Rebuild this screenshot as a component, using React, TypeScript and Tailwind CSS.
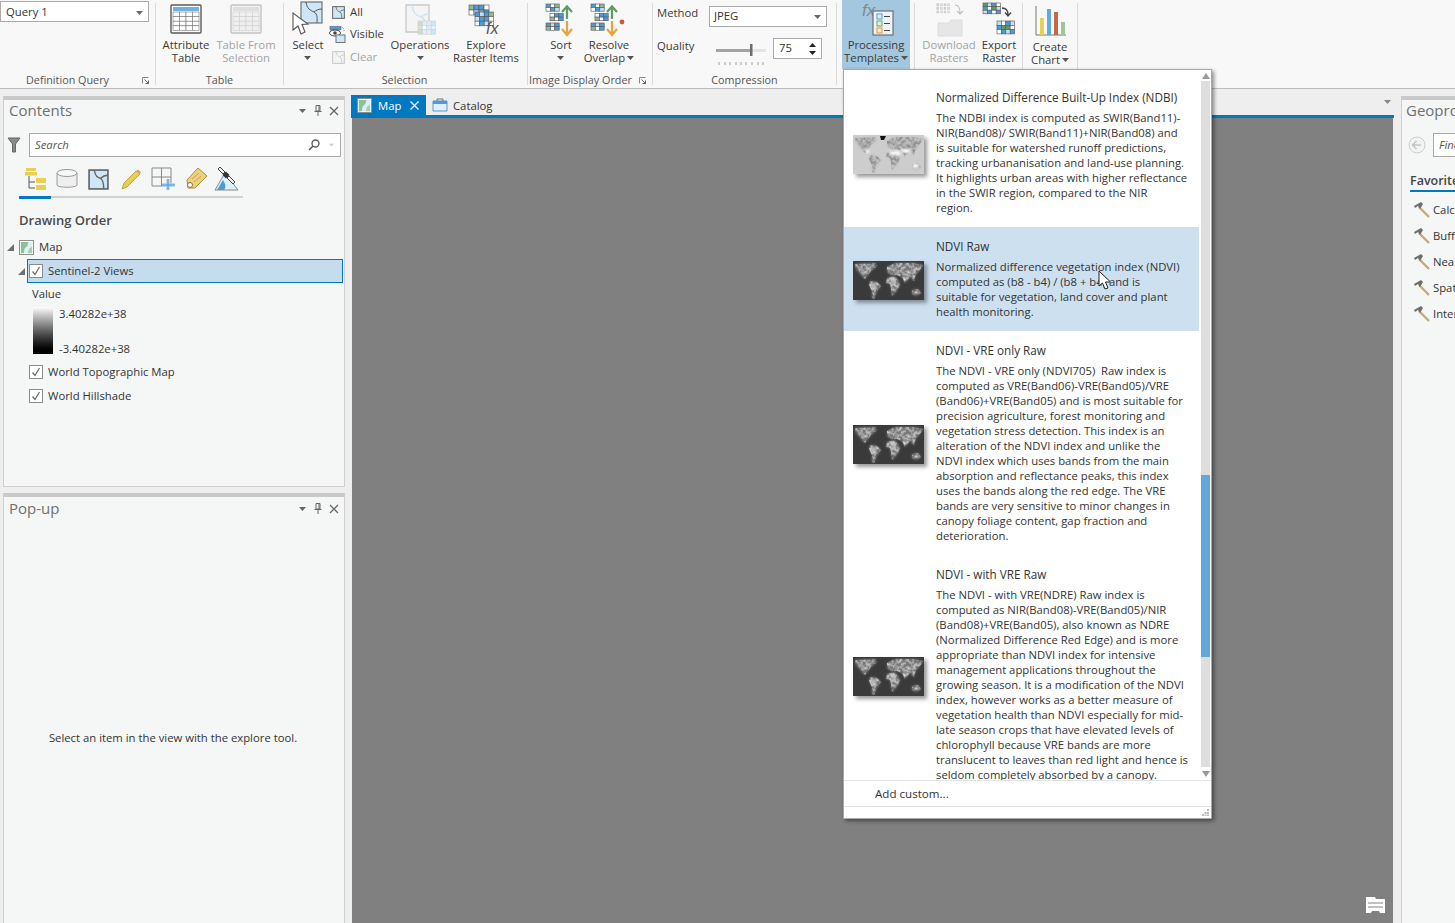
import React from "react";

const Tri = ({ c = "#555", cls = "" }: { c?: string; cls?: string }) => (
  <svg width="7" height="4" viewBox="0 0 7 4" className={"inline-block " + cls}><path d="M0 0H7L3.5 4Z" fill={c} /></svg>
);

function Cells({ x, y, c, r, w, h, fills = [], stroke = "#555" }: { x: number; y: number; c: number; r: number; w: number; h: number; fills?: string[]; stroke?: string }) {
  const out: React.ReactNode[] = [];
  for (let j = 0; j < r; j++)
    for (let i = 0; i < c; i++)
      out.push(<rect key={i + "-" + j} x={x + i * w} y={y + j * h} width={w} height={h} fill={fills[(i + j * c) % (fills.length || 1)] || "#fff"} stroke={stroke} strokeWidth="0.6" />);
  return <g>{out}</g>;
}

const AttrTable = ({ dim = false }: { dim?: boolean }) => {
  const s = dim ? "#c4c4c4" : "#5a5a5a";
  return (
    <svg width="32" height="30" viewBox="0 0 32 30">
      <rect x="1" y="1" width="30" height="28" rx="1" fill={dim ? "#f2f2f2" : "#fff"} stroke={s} strokeWidth="1.4" />
      <rect x="3" y="3" width="26" height="4" fill={dim ? "#dedede" : "#6fb1e3"} />
      <Cells x={3} y={8} c={4} r={4} w={6.5} h={4.6} stroke={dim ? "#cfcfcf" : "#777"} fills={[dim ? "#efefef" : "#fff"]} />
    </svg>
  );
};

const MapGlyph = ({ size, dim = false }: { size: number; dim?: boolean }) => (
  <svg width={size} height={size} viewBox="0 0 20 20">
    <rect x="1" y="1" width="18" height="18" fill={dim ? "#f4f4f4" : "#cfe6f7"} stroke={dim ? "#c6c6c6" : "#5f5f5f"} strokeWidth="1.5" />
    <path d="M6 1C7 7 9 8 12 9C15 11 15 15 15 19M12 9C14 7 16 6 19 6" fill="none" stroke={dim ? "#c9c9c9" : "#666"} strokeWidth="1.3" />
  </svg>
);

const MapThumb = ({ size }: { size: number }) => (
  <svg width={size} height={size} viewBox="0 0 16 16">
    <rect x="0.500" y="0.500" width="15" height="15" fill="#fff" stroke="#8a8a8a" />
    <rect x="2" y="2" width="12" height="12" fill="#dceefa" />
    <path d="M2 2H10L9 6L6 9L5 14H2Z" fill="#8fbf96" />
    <path d="M11 9L14 7V14H9Z" fill="#a7cfa9" />
  </svg>
);

const SelectIcon = () => (
  <svg width="36" height="34" viewBox="0 0 36 34">
    <rect x="10" y="1" width="21" height="21" fill="#cfe6f7" stroke="#666" strokeWidth="1.1" />
    <path d="M15 1C16 8 19 9 23 11C27 13 26 18 26 22M23 11C25 9 28 8 31 8" fill="none" stroke="#555" strokeWidth="1" />
    <path d="M2 12L2 29L7 25L10 33L14 31L11 23.5L17 23Z" fill="#fff" stroke="#555" strokeWidth="1.1" />
  </svg>
);

const VisibleIcon = () => (
  <svg width="17" height="17" viewBox="0 0 17 17">
    <rect x="1" y="0.5" width="11" height="3.5" fill="#4f9bd6" stroke="#555" strokeWidth="0.5" />
    <ellipse cx="6" cy="7" rx="5.5" ry="3" fill="#fff" stroke="#444" strokeWidth="1" />
    <circle cx="6" cy="7" r="1.8" fill="#444" />
    <rect x="7" y="9" width="9" height="7.5" fill="#cfe6f7" stroke="#666" strokeWidth="0.9" />
    <path d="M13 1L15 3V6" stroke="#555" fill="none" strokeWidth="0.8" strokeDasharray="1 1" />
  </svg>
);

const OperationsIcon = () => (
  <svg width="32" height="33" viewBox="0 0 32 33">
    <path d="M1 1H24V28H1Z" fill="#f4f4f4" stroke="#c9c9c9" strokeWidth="1.3" />
    <path d="M7 1C8 10 12 12 16 13C19 14 20 16 20 20M16 13C18 11 21 10 24 10" fill="none" stroke="#d4e3ee" strokeWidth="1.6" />
    <Cells x={13} y={17} c={4} r={3} w={4.4} h={4.4} stroke="#c9d3da" fills={["#cfdcc6", "#dff0fb", "#e6eef4", "#cfe6f7", "#d8e4cd", "#ffffff", "#dff0fb", "#eaf2f8"]} />
  </svg>
);

const FX = ({ x, y, size = 16, c = "#555" }: { x: number; y: number; size?: number; c?: string }) => (
  <text x={x} y={y} fontFamily="'Liberation Sans',sans-serif" fontStyle="italic" fontSize={size} fill={c}>fx</text>
);

const ExploreIcon = () => (
  <svg width="36" height="36" viewBox="0 0 36 36">
    <Cells x={1} y={1} c={4} r={2} w={5} h={5} fills={["#8fb996", "#4f9bd6", "#4f9bd6", "#fff", "#fff", "#bfe0f5"]} />
    <Cells x={7} y={8} c={4} r={3} w={4.6} h={4.6} fills={["#4f9bd6", "#bfe0f5", "#4f9bd6", "#8fb996", "#bfe0f5", "#4f9bd6", "#4f9bd6", "#fff", "#fff", "#4f9bd6", "#bfe0f5", "#fff"]} />
    <FX x={18} y={30} size={16} />
  </svg>
);

const Stacks = () => (
  <g>
    <Cells x={1} y={1} c={3} r={2} w={4.4} h={3.6} fills={["#4f9bd6", "#fff", "#8fb996", "#fff", "#4f9bd6", "#bfe0f5"]} />
    <Cells x={5} y={10.5} c={3} r={2} w={4.4} h={3.6} fills={["#fff", "#4f9bd6", "#4f9bd6", "#8fb996", "#fff", "#4f9bd6"]} />
    <Cells x={1} y={20} c={3} r={2} w={4.4} h={3.6} fills={["#4f9bd6", "#bfe0f5", "#4f9bd6", "#8fb996", "#fff", "#4f9bd6"]} />
  </g>
);

const SortIcon = ({ dot = false }: { dot?: boolean }) => (
  <svg width={dot ? 38 : 32} height="34" viewBox={dot ? "0 0 38 34" : "0 0 32 34"}>
    <Stacks />
    <path d="M22 16V5M17 9L22 3.500L27 9" fill="none" stroke="#5c9e5f" strokeWidth="2.2" />
    <path d="M22 18V31M17 26L22 32L27 26" fill="none" stroke="#e8a33f" strokeWidth="2.2" />
    {dot && <circle cx="32" cy="19" r="2.4" fill="#c9573b" />}
  </svg>
);

const TemplatesIcon = () => (
  <svg width="36" height="36" viewBox="0 0 36 36">
    <FX x={1} y={15} size={17} c="#7f8a94" />
    <rect x="12" y="10" width="20" height="24" fill="#eef3f6" stroke="#666" strokeWidth="1.1" />
    <rect x="16" y="13" width="5" height="5" fill="#dff0fb" stroke="#4f9bd6" />
    <rect x="16" y="20" width="5" height="5" fill="#dff0db" stroke="#6fa85f" />
    <rect x="16" y="27" width="5" height="5" fill="#fbe6cf" stroke="#e0953c" />
    <path d="M23 15.500H29M23 22.500H29M23 29.500H29" stroke="#444" strokeWidth="1" />
  </svg>
);

const DownloadIcon = () => (
  <svg width="36" height="36" viewBox="0 0 36 36">
    <Cells x={1} y={2} c={4} r={3} w={3.6} h={3.6} stroke="#fff" fills={["#cfcfcf", "#d8d8d8"]} />
    <path d="M20 4C24 4 25 7 25 12M22 10L25 13L28 10" fill="none" stroke="#bfbfbf" strokeWidth="1.2" />
    <path d="M3 22H14L16 19H27V35H3Z" fill="#e6e6e6" stroke="#dcdcdc" />
  </svg>
);

const ExportIcon = () => (
  <svg width="36" height="36" viewBox="0 0 36 36">
    <Cells x={1} y={2} c={4} r={3} w={4.4} h={3.6} fills={["#5a9e5f", "#bfe0f5", "#4f9bd6", "#fff", "#4f9bd6", "#fff", "#5a9e5f", "#bfe0f5", "#bfe0f5", "#4f9bd6", "#fff", "#4f9bd6"]} />
    <path d="M20 7C25 7 26 10 26 14M23 11.500L26 15L29 11.500" fill="none" stroke="#444" strokeWidth="1.3" />
    <Cells x={15} y={20} c={4} r={3} w={4.4} h={4.3} fills={["#bfe0f5", "#fff", "#4f9bd6", "#bfe0f5", "#4f9bd6", "#5a9e5f", "#5a9e5f", "#fff", "#fff", "#4f9bd6", "#bfe0f5", "#4f9bd6"]} />
  </svg>
);

const ChartIcon = () => (
  <svg width="32" height="32" viewBox="0 0 32 32">
    <path d="M1 1V30H31" fill="none" stroke="#777" strokeWidth="1" />
    <rect x="5" y="13" width="4" height="17" fill="#e7cf59" />
    <rect x="12" y="4" width="4" height="26" fill="#5dabe0" />
    <rect x="19" y="7" width="4" height="23" fill="#c7674a" />
    <rect x="26" y="17" width="4" height="13" fill="#9fc79c" />
  </svg>
);

const Launcher = () => (
  <svg width="7" height="7" viewBox="0 0 7 7"><path d="M0.500 6.500V0.500H6.500" fill="none" stroke="#888" /><path d="M2.500 2.500L6.500 6.500M6.500 3.500V6.500H3.500" fill="none" stroke="#666" /></svg>
);

function Tall({ icon, a, b, w, dim, caret, inlineCaret, top = 38, cls = "" }: { icon: React.ReactNode; a: string; b?: string; w: number; dim?: boolean; caret?: boolean; inlineCaret?: boolean; top?: number; cls?: string }) {
  return (
    <div className={"flex flex-col items-center shrink-0 " + cls} style={{ width: w }}>
      <div className="flex items-start justify-center" style={{ height: top }}>{icon}</div>
      <div className={"text-center leading-[13px] whitespace-nowrap text-[11.3px] " + (dim ? "text-[#a3a3a3]" : "text-[#3a3a3a]")}>
        <div>{a}</div>
        {b && <div>{b}{inlineCaret && <Tri cls="ml-[2px] mb-[2px]" />}</div>}
        {caret && <div className="h-[13px] flex items-center justify-center"><Tri /></div>}
      </div>
    </div>
  );
}

const Group = ({ w, label, launcher, children, labelPad = 0 }: { w: number; label: string; launcher?: boolean; children: React.ReactNode; labelPad?: number }) => (
  <div className="flex flex-col shrink-0 relative" style={{ width: w }}>
    <div className="h-[72px] flex">{children}</div>
    <div className="h-[16px] flex items-center justify-center text-[10.800px] text-[#555] whitespace-nowrap" style={{ paddingRight: labelPad }}>{label}</div>
    {launcher && <div className="absolute right-[6px] bottom-[4px] flex"><Launcher /></div>}
  </div>
);

const Div = () => <div className="w-px my-[3px] bg-[#dadada] shrink-0" />;

const SmallRow = ({ icon, label, dim }: { icon: React.ReactNode; label: string; dim?: boolean }) => (
  <div className="h-[22.5px] flex items-center whitespace-nowrap">
    <div className="w-[18px] flex justify-start">{icon}</div>
    <span className={"text-[11.3px] " + (dim ? "text-[#a3a3a3]" : "text-[#3a3a3a]")}>{label}</span>
  </div>
);

function Ribbon() {
  return (
    <div className="h-[89px] shrink-0 bg-[#f8f8f8] border-b border-[#bdbdbd] flex">
      <Group w={155} label="Definition Query" launcher labelPad={20}>
        <div className="mt-[1px] h-[21px] w-[149px] bg-white border border-[#ababab] flex items-center justify-between pl-[5px] pr-[5px] pt-[2px] text-[11.3px] text-[#333]">
          <span>Query 1</span><Tri c="#666" />
        </div>
      </Group>
      <Div />
      <Group w={127} label="Table">
        <Tall w={60} a="Attribute" b="Table" icon={<div className="mt-[4px]"><AttrTable /></div>} />
        <Tall w={60} dim a="Table From" b="Selection" icon={<div className="mt-[4px]"><AttrTable dim /></div>} />
      </Group>
      <Div />
      <Group w={243} label="Selection" labelPad={2}>
        <Tall w={48} a="Select" caret icon={<div className="mt-[1px] ml-[1px]"><SelectIcon /></div>} />
        <div className="w-[58px] pt-[1px]">
          <SmallRow label="All" icon={<MapGlyph size={13} />} />
          <SmallRow label="Visible" icon={<div className="ml-[-3px]"><VisibleIcon /></div>} />
          <SmallRow dim label="Clear" icon={<MapGlyph size={13} dim />} />
        </div>
        <Tall w={60} a="Operations" caret icon={<div className="mt-[4px] ml-[2px]"><OperationsIcon /></div>} />
        <Tall w={70} cls="ml-[1px]" a="Explore" b="Raster Items" icon={<div className="mt-[4px]"><ExploreIcon /></div>} />
      </Group>
      <Div />
      <Group w={124} label="Image Display Order" launcher labelPad={19}>
        <Tall w={44} cls="ml-[11px]" a="Sort" caret icon={<div className="mt-[3px]"><SortIcon /></div>} />
        <Tall w={52} a="Resolve" b="Overlap" inlineCaret icon={<div className="mt-[3px]"><SortIcon dot /></div>} />
      </Group>
      <Div />
      <Group w={183} label="Compression">
        <div className="pl-[4px] w-[56px] text-[11.3px] text-[#3a3a3a] pt-[5px]">
          <div className="h-[33px]">Method</div>
          <div>Quality</div>
        </div>
        <div className="w-[118px] pt-[6px]">
          <div className="h-[21px] bg-white border border-[#ababab] flex items-center justify-between pl-[4px] pr-[5px] text-[11.3px] text-[#333]">
            <span>JPEG</span><Tri c="#666" />
          </div>
          <div className="flex mt-[11px] items-start">
            <div className="w-[50px] ml-[7px] mt-[4px]">
              <svg width="50" height="24" viewBox="0 0 50 24">
                <rect x="0" y="7" width="50" height="3" fill="#e4e4e4" />
                <rect x="0" y="7" width="35" height="3" fill="#a3a3a3" />
                <rect x="34" y="2" width="2.500" height="12" fill="#6d6d6d" />
                <path d="M3 20V23M9 20V23M14 20V23M20 20V23M25 20V23M30 20V23M36 20V23M42 20V23M47 20V23" stroke="#888" strokeWidth="0.8" />
              </svg>
            </div>
            <div className="ml-[7px] w-[49px] h-[21px] bg-white border border-[#ababab] flex items-center justify-between pl-[5px] pr-[5px] text-[11.3px] text-[#333]">
              <span>75</span>
              <span className="flex flex-col gap-[4px]">
                <svg width="7" height="4" viewBox="0 0 7 4"><path d="M0 4H7L3.500 0Z" fill="#222" /></svg>
                <svg width="7" height="4" viewBox="0 0 7 4"><path d="M0 0H7L3.500 4Z" fill="#222" /></svg>
              </span>
            </div>
          </div>
        </div>
      </Group>
      <Div />
      <div className="w-[5px] shrink-0" />
      <div className="w-[68px] h-[69px] bg-[#a4c7e0] shrink-0 flex">
        <Tall w={68} a="Processing" b="Templates" inlineCaret icon={<div className="mt-[1px] ml-[6px]"><TemplatesIcon /></div>} />
      </div>
      <div className="w-[4px] shrink-0" />
      <Div />
      <Tall w={54} cls="ml-[7px]" dim a="Download" b="Rasters" icon={<div className="mt-[1px] ml-[7px]"><DownloadIcon /></div>} />
      <Tall w={46} a="Export" b="Raster" icon={<div className="mt-[1px] ml-[2px]"><ExportIcon /></div>} />
      <Div />
      <Tall w={54} a="Create" b="Chart" inlineCaret top={40} icon={<div className="mt-[5px] ml-[1px]"><ChartIcon /></div>} />
      <Div />
    </div>
  );
}

const Check = () => (
  <span className="w-[14px] h-[14px] border border-[#8a8a8a] bg-white flex items-center justify-center shrink-0">
    <svg width="10" height="10" viewBox="0 0 10 10"><path d="M1.500 5.500L4 8.500L8.500 1" fill="none" stroke="#666" strokeWidth="1.200" /></svg>
  </span>
);

const ExpandTri = () => (
  <svg width="7" height="7" viewBox="0 0 7 7" className="shrink-0"><path d="M7 0V7H0Z" fill="#6e6e6e" /></svg>
);

const PanelHead = ({ title }: { title: string }) => (
  <div className="h-[21px] flex items-center justify-between pl-[5px] pr-[5px]">
    <span className="text-[15px] text-[#707070]">{title}</span>
    <span className="flex items-center gap-[6px] text-[#555]">
      <Tri c="#666" cls="mr-[1px]" />
      <svg width="10" height="11" viewBox="0 0 10 11"><path d="M3 0.500H7V6H3ZM1.500 6.500H8.500M5 6.500V11M6 1V6" fill="none" stroke="#666" /></svg>
      <svg width="10" height="10" viewBox="0 0 10 10"><path d="M1 1L9 9M9 1L1 9" stroke="#666" strokeWidth="1.300" /></svg>
    </span>
  </div>
);

const TocIcons = () => (
  <div className="flex items-center h-[28px] pl-[15px]">
    <svg width="28" height="24" viewBox="0 0 28 24" className="shrink-0">
      <rect x="7" y="1" width="10" height="3" fill="#e8cf50" /><rect x="6" y="5" width="12" height="3.500" fill="#e8cf50" />
      <path d="M10 9V21H16M10 15H16" fill="none" stroke="#555" />
      <rect x="17" y="11" width="10" height="5" fill="#e8cf50" /><rect x="17" y="18" width="10" height="5" fill="#e8cf50" />
    </svg>
    <svg width="24" height="22" viewBox="0 0 24 22" className="ml-[8px] shrink-0">
      <path d="M2 5V17C2 20 22 20 22 17V5" fill="#eee" stroke="#999" />
      <ellipse cx="12" cy="5" rx="10" ry="3.500" fill="#f7f7f7" stroke="#999" />
    </svg>
    <div className="ml-[9px] flex"><MapGlyph size={21} /></div>
    <svg width="22" height="22" viewBox="0 0 22 22" className="ml-[11px] shrink-0">
      <path d="M2 21L4 15L16 3L20 6L7 19Z" fill="#e8cf50" stroke="#b09a30" strokeWidth="0.8" />
      <path d="M16 3L18 1.500L21 4L20 6Z" fill="#e39a8a" />
    </svg>
    <svg width="26" height="24" viewBox="0 0 26 24" className="ml-[9px] shrink-0">
      <path d="M1 1H20V19H1ZM10.500 1V19M1 10H20" fill="#f6f6f6" stroke="#888" />
      <path d="M17 12V23M11 18H24" stroke="#a9d4f0" strokeWidth="3.500" />
      <path d="M17 12V23M11 18H24" stroke="#4f9bd6" strokeWidth="1" />
    </svg>
    <svg width="24" height="24" viewBox="0 0 24 24" className="ml-[7px] shrink-0">
      <path d="M14 1L23 9L11 21L4 21L3 13Z" fill="#ecd27b" stroke="#b08c3d" />
      <path d="M8 12L15 6M10 15L17 9" stroke="#c6a754" />
      <circle cx="6" cy="18" r="2.500" fill="#fff" stroke="#8a6f2f" />
    </svg>
    <svg width="26" height="24" viewBox="0 0 26 24" className="ml-[6px] shrink-0">
      <path d="M1 23L11 6L24 23Z" fill="#dff0fb" stroke="#888" />
      <path d="M3 23L9 13C12 18 12 20 10 23Z" fill="#4f9bd6" />
      <path d="M6 0L11 5L9 7L4 2Z M15 9L21 15L19 17L13 11Z" fill="#eee" stroke="#444" />
      <rect x="9.500" y="5.500" width="5" height="5" fill="#333" transform="rotate(45 12 8)" />
    </svg>
  </div>
);

const Panel = ({ title, cls, children }: { title: string; cls: string; children: React.ReactNode }) => (
  <div className={"flex flex-col bg-[#f5f7f7] border-x border-b border-[#cfcfcf] border-t-[4px] border-t-[#c9c9c9] " + cls}>
    <PanelHead title={title} />
    {children}
  </div>
);

function Contents() {
  return (
    <Panel title="Contents" cls="h-[391px] shrink-0">
      <div className="flex items-center mt-[12px] pl-[3px] pr-[3px]">
        <svg width="14" height="16" viewBox="0 0 14 16" className="shrink-0"><path d="M1 1H13L8.500 7V15H5.500V7Z" fill="#8a8a8a" stroke="#666" /></svg>
        <div className="ml-[8px] flex-1 h-[24px] bg-white border border-[#a9a9a9] flex items-center justify-between pl-[5px] pr-[5px]">
          <span className="italic text-[11.3px] text-[#555]">Search</span>
          <span className="flex items-center gap-[8px]">
            <svg width="12" height="12" viewBox="0 0 12 12"><circle cx="7.500" cy="4.500" r="3.500" fill="none" stroke="#555" strokeWidth="1.300" /><path d="M5 7L1 11" stroke="#555" strokeWidth="1.500" /></svg>
            <Tri c="#ccc" cls="scale-75" />
          </span>
        </div>
      </div>
      <div className="mt-[8px]"><TocIcons /></div>
      <div className="ml-[15px] w-[224px] h-[2px] mt-[3px] bg-[#cfd2d3]"><div className="w-[32px] h-[3px] bg-[#0079c1]" /></div>
      <div className="mt-[13px] pl-[15px] text-[13px] font-semibold text-[#4a4a4a]">Drawing Order</div>
      <div className="mt-[5px] flex items-center pl-[3px] h-[23px] text-[11.3px] text-[#333]">
        <ExpandTri />
        <span className="ml-[5px] w-[15px] h-[15px] flex"><MapThumb size={15} /></span>
        <span className="ml-[5px]">Map</span>
      </div>
      <div className="flex items-center h-[25px] ml-[14px] mr-px">
        <ExpandTri />
        <div className="ml-[2px] flex-1 h-[24px] bg-[#c5dbee] border border-[#0079c1] flex items-center pl-[1px] text-[11.3px] text-[#333]">
          <Check /><span className="ml-[5px]">Sentinel-2 Views</span>
        </div>
      </div>
      <div className="pl-[28px] mt-[2px] text-[11.3px] text-[#333] font-medium">Value</div>
      <div className="flex pl-[29px] mt-[5px] h-[47px]">
        <div className="w-[20px] h-[47px] bg-gradient-to-b from-white to-black" />
        <div className="ml-[6px] flex flex-col justify-between text-[11.3px] text-[#333] leading-[14px] h-[49px]">
          <span>3.40282e+38</span>
          <span>-3.40282e+38</span>
        </div>
      </div>
      <div className="flex items-center h-[24px] ml-[25px] mt-[6px] text-[11.3px] text-[#333]"><Check /><span className="ml-[5px]">World Topographic Map</span></div>
      <div className="flex items-center h-[24px] ml-[25px] text-[11.3px] text-[#333]"><Check /><span className="ml-[5px]">World Hillshade</span></div>
    </Panel>
  );
}

const LAND = [
  "M2 3L22 2L24 5L18 10L15 14L12 18L8 14L3 8Z",
  "M17 20L24 21L28 25L24 30L21 38L19 37L19 30L16 24Z",
  "M34 17L41 15L46 20L47 24L43 31L39 35L38 27L37 23L33 22Z",
  "M34 6L42 2L60 2L70 4L67 9L63 13L61 20L57 16L52 22L49 16L44 14L38 14L34 11Z",
  "M59 29L65 28L68 32L63 35L59 33Z",
];

const WorldThumb = ({ light = false }: { light?: boolean }) => {
  const id = light ? "noiseL" : "noiseD";
  const soft = light ? "softL" : "softD";
  return (
    <svg width="71" height="39" viewBox="0 0 71 39" className="shrink-0 mt-[3px] shadow-[3px_3px_4px_rgba(70,70,70,0.55)]">
      <defs>
        <filter id={soft} x="-5%" y="-5%" width="110%" height="110%">
          <feGaussianBlur stdDeviation="0.8" />
        </filter>
        <filter id={id} x="0" y="0" width="100%" height="100%">
          <feTurbulence type="fractalNoise" baseFrequency="0.3" numOctaves="2" seed="7" result="n" />
          <feColorMatrix in="n" type="matrix" values="0 0 0 0 0  0 0 0 0 0  0 0 0 0 0  2 0 0 0 -0.700" result="a" />
          <feComposite in="SourceGraphic" in2="a" operator="in" result="c" />
          <feGaussianBlur in="c" stdDeviation="0.5" />
        </filter>
      </defs>
      <rect width="71" height="39" fill={light ? "#cdcdcd" : "#3a3a3a"} />
      <g fill={light ? "#bdbdbd" : "#777777"} filter={`url(#${soft})`}>
        {LAND.map((d) => <path key={d} d={d} />)}
      </g>
      <g fill={light ? "#7d7d7d" : "#dedede"} filter={`url(#${id})`}>
        {LAND.map((d) => <path key={d} d={d} />)}
      </g>
      {light && <path d="M27 1H33L31 5H28Z" fill="#111" />}
      {light && <path d="M35 16H46L48 20L38 20Z M48 14H58L56 18H50Z M12 15H17L15 19Z M60 29H66L65 33H60Z" fill="#fafafa" filter={`url(#${soft})`} />}
      {!light && <path d="M18 22H24L22 28H19Z M37 17H43L42 23H38Z" fill="#d6d6d6" opacity="0.65" filter={`url(#${soft})`} />}
    </svg>
  );
};

const items: { title: string; light?: boolean; hover?: boolean; lines: string[] }[] = [
  {
    title: "Normalized Difference Built-Up Index (NDBI)",
    light: true,
    lines: [
      "The NDBI index is computed as SWIR(Band11)-",
      "NIR(Band08)/ SWIR(Band11)+NIR(Band08) and",
      "is suitable for watershed runoff predictions,",
      "tracking urbananisation and land-use planning.",
      "It highlights urban areas with higher reflectance",
      "in the SWIR region, compared to the NIR",
      "region.",
    ],
  },
  {
    title: "NDVI Raw",
    hover: true,
    lines: [
      "Normalized difference vegetation index (NDVI)",
      "computed as (b8 - b4) / (b8 + b4) and is",
      "suitable for vegetation, land cover and plant",
      "health monitoring.",
    ],
  },
  {
    title: "NDVI - VRE only Raw",
    lines: [
      "The NDVI - VRE only (NDVI705)  Raw index is",
      "computed as VRE(Band06)-VRE(Band05)/VRE",
      "(Band06)+VRE(Band05) and is most suitable for",
      "precision agriculture, forest monitoring and",
      "vegetation stress detection. This index is an",
      "alteration of the NDVI index and unlike the",
      "NDVI index which uses bands from the main",
      "absorption and reflectance peaks, this index",
      "uses the bands along the red edge. The VRE",
      "bands are very sensitive to minor changes in",
      "canopy foliage content, gap fraction and",
      "deterioration.",
    ],
  },
  {
    title: "NDVI - with VRE Raw",
    lines: [
      "The NDVI - with VRE(NDRE) Raw index is",
      "computed as NIR(Band08)-VRE(Band05)/NIR",
      "(Band08)+VRE(Band05), also known as NDRE",
      "(Normalized Difference Red Edge) and is more",
      "appropriate than NDVI index for intensive",
      "management applications throughout the",
      "growing season. It is a modification of the NDVI",
      "index, however works as a better measure of",
      "vegetation health than NDVI especially for mid-",
      "late season crops that have elevated levels of",
      "chlorophyll because VRE bands are more",
      "translucent to leaves than red light and hence is",
      "seldom completely absorbed by a canopy.",
    ],
  },
];

function TemplatesPopup() {
  return (
    <div className="absolute left-[843px] top-[69px] w-[369px] h-[750px] bg-white border border-[#a8a8a8] shadow-[2px_2px_4px_rgba(0,0,0,0.45)] flex flex-col z-10">
      <div className="h-[710px] flex overflow-hidden shrink-0">
        <div className="w-[355px] shrink-0 pt-[8px] overflow-hidden">
          {items.map((it) => (
            <div key={it.title} className={"flex items-center pl-[9px] pt-[12px] pb-[12px] relative " + (it.hover ? "bg-[#cde0f0]" : "")}>
              <WorldThumb light={it.light} />
              <div className="ml-[12px] text-[11.3px] leading-[15px] text-[#333] whitespace-pre">
                <div className="mb-[5px] text-[11.7px]">{it.title}</div>
                {it.lines.map((l, i) => <div key={i}>{l}</div>)}
              </div>
              {it.hover && (
                <svg width="14" height="20" viewBox="0 0 14 20" className="absolute left-[254px] top-[43px]">
                  <path d="M1 1V16L4.500 13L7 19L10 18L7.500 12H12.500Z" fill="#fff" stroke="#222" strokeWidth="1" />
                </svg>
              )}
            </div>
          ))}
        </div>
        <div className="ml-[2px] w-[9px] shrink-0 flex flex-col items-center">
          <div className="h-[11px] flex items-center"><svg width="8" height="6" viewBox="0 0 8 6"><path d="M0 6H8L4 0Z" fill="#9a9a9a" /></svg></div>
          <div className="flex-1 w-full bg-[#dedede] flex flex-col">
            <div className="h-[394px] shrink-0" />
            <div className="h-[182px] shrink-0 bg-[#62a8dd]" />
          </div>
          <div className="h-[13px] flex items-center"><svg width="8" height="6" viewBox="0 0 8 6"><path d="M0 0H8L4 6Z" fill="#9a9a9a" /></svg></div>
        </div>
      </div>
      <div className="h-[27px] border-y border-[#dfe3e6] flex items-center pl-[31px] pt-[1px] text-[11.6px] text-[#333] shrink-0">Add custom...</div>
      <div className="flex-1 flex justify-end items-end pr-[2px] pb-[2px]">
        <svg width="7" height="7" viewBox="0 0 7 7"><path d="M5 0H7V2H5ZM2.500 3H4.500V5H2.500ZM5 3H7V5H5ZM0 5H2V7H0ZM2.500 5.500H4.500V7H2.500ZM5 5.500H7V7H5Z" fill="#bbb" /></svg>
      </div>
    </div>
  );
}

const tools = ["Calculate Field", "Buffer", "Near", "Spatial Join", "Intersect"];

const Hammer = () => (
  <svg width="18" height="18" viewBox="0 0 18 18" className="shrink-0">
    <path d="M6 6L16 16" stroke="#c9a878" strokeWidth="2.400" />
    <path d="M1 5L8 1L10 3L7 8L5 5L2 7Z" fill="#6f6f6f" />
  </svg>
);

export default function App() {
  return (
    <div className="relative w-[1455px] h-[923px] overflow-hidden flex flex-col bg-[#eeeeee] font-['Open_Sans',sans-serif]">
      <Ribbon />
      <div className="flex-1 flex min-h-0">
        <div className="ml-[3px] w-[342px] shrink-0 flex flex-col pt-[7px]">
          <Contents />
          <Panel title="Pop-up" cls="flex-1 mt-[6px] border-b-0 pt-[1px]">
            <div className="flex-1 flex items-center justify-center text-[11.3px] text-[#333] pt-[35px] pr-[2px]">Select an item in the view with the explore tool.</div>
          </Panel>
        </div>
        <div className="ml-[6px] w-[1043px] shrink-0 flex flex-col">
          <div className="h-[26px] flex items-end relative shrink-0 bg-[#eeeeee]">
            <div className="w-[75px] h-[20px] bg-[#0079c1] flex items-center pl-[6px] text-white text-[11.3px]">
              <MapThumb size={15} />
              <span className="ml-[6px] mt-[2px]">Map</span>
              <svg width="9" height="9" viewBox="0 0 9 9" className="ml-[9px]"><path d="M0.500 0.500L8.500 8.500M8.500 0.500L0.500 8.500" stroke="#fff" strokeWidth="1.200" /></svg>
            </div>
            <div className="h-[20px] flex items-center pl-[6px] text-[11.3px] text-[#333]">
              <svg width="16" height="14" viewBox="0 0 16 14"><path d="M1 3H15V13H1Z" fill="#dff0fb" stroke="#4f9bd6" /><path d="M1 3H15V6H1Z" fill="#4f9bd6" /><path d="M5 3V1H11V3" fill="none" stroke="#777" /></svg>
              <span className="ml-[5px] mt-[2px]">Catalog</span>
            </div>
            <div className="absolute right-[3px] top-[11px] flex"><Tri c="#888" /></div>
          </div>
          <div className="h-[3px] bg-[#0079c1] shrink-0" />
          <div className="flex-1 bg-[#808080] relative ml-px mr-px">
            <svg width="21" height="18" viewBox="0 0 21 18" className="absolute right-[7px] bottom-[9px]">
              <path d="M1 1H10L11 3H20V17H15L14 15H7L6 17H1Z" fill="#fff" />
              <path d="M3 7H18M3 11H18" stroke="#808080" />
            </svg>
          </div>
        </div>
        <div className="ml-[7px] flex-1 flex flex-col pt-[7px] overflow-hidden">
          <div className="flex-1 bg-[#f5f7f7] border-l border-[#cfcfcf] border-t-[4px] border-t-[#c9c9c9] overflow-hidden">
            <div className="h-[21px] flex items-center pl-[4px] text-[15px] text-[#707070] whitespace-nowrap">Geoprocessing</div>
            <div className="flex items-center mt-[12px] pl-[6px]">
              <svg width="18" height="18" viewBox="0 0 18 18" className="shrink-0"><circle cx="9" cy="9" r="8" fill="#f3f3f3" stroke="#ccc" /><path d="M13 9H5M8.500 5L4.500 9L8.500 13" fill="none" stroke="#c4c4c4" strokeWidth="1.500" /></svg>
              <div className="ml-[7px] w-[60px] shrink-0 h-[24px] bg-white border border-[#a9a9a9] flex items-center pl-[5px] italic text-[11.3px] text-[#555] whitespace-nowrap">Find Tools</div>
            </div>
            <div className="ml-[8px] mt-[15px] h-[20px] border-b-[2px] border-[#0079c1] text-[12.500px] font-semibold text-[#444] whitespace-nowrap">Favorites</div>
            <div className="mt-[5px] pl-[11px]">
              {tools.map((t) => (
                <div key={t} className="h-[26px] flex items-center text-[11.3px] text-[#333] whitespace-nowrap">
                  <Hammer /><span className="ml-[2px]">{t}</span>
                </div>
              ))}
            </div>
          </div>
        </div>
      </div>
      <TemplatesPopup />
    </div>
  );
}
